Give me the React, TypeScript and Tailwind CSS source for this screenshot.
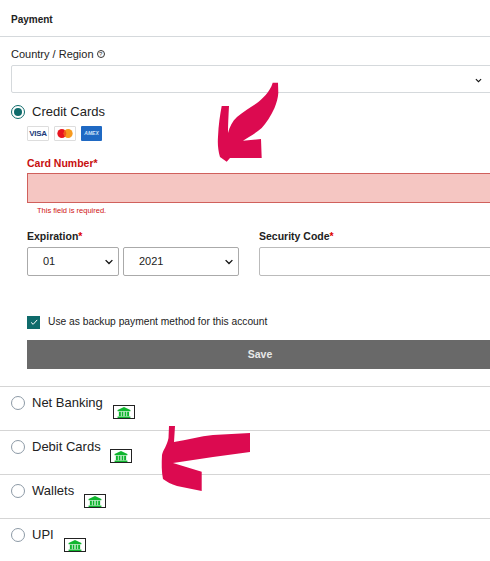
import React from 'react'

const PINK = '#dc0a50'

function Chevron({ className }: { className: string }) {
  return (
    <svg viewBox="0 0 12 8" className={className} fill="none" stroke="#111" strokeWidth="1.8">
      <path d="M1.5 1.5 6 6l4.5-4.5" />
    </svg>
  )
}

function Radio({ checked }: { checked?: boolean }) {
  return (
    <span className={`flex h-[14px] w-[14px] shrink-0 items-center justify-center rounded-full border-[1.5px] bg-white ${checked ? 'border-[#0f6b6b]' : 'border-[#8d9aa6]'}`}>
      {checked && <span className="h-[8px] w-[8px] rounded-full bg-[#0f6b6b]" />}
    </span>
  )
}

function BankIcon({ className }: { className: string }) {
  return (
    <span className={`flex h-[14px] w-[22px] items-center justify-center border border-[#222] bg-white ${className}`}>
      <svg viewBox="0 0 16 12" className="h-[11px] w-[16px]" fill="#0fb52e">
        <path d="M8 0 15 3.4V4.6H1V3.4Z" />
        <path d="M2.4 5.2h2.2v5H2.4ZM5.4 5.2h2v5h-2ZM8.6 5.2h2v5h-2ZM11.4 5.2h2.2v5h-2.2Z" />
        <path d="M1 10.4h14V12H1Z" />
      </svg>
    </span>
  )
}

function PayRow({ label, iconClass, height }: { label: string; iconClass: string; height: string }) {
  return (
    <div className={`flex border-t border-[#d5d5d5] pl-[11px] ${height}`}>
      <div className="mt-[9px] flex h-[14px] items-center">
        <Radio />
      </div>
      <span className="ml-[7px] mt-[8px] text-[13px] leading-[16px] text-[#222]">{label}</span>
      <BankIcon className={iconClass} />
    </div>
  )
}

function CardLogos() {
  return (
    <div className="ml-[27px] mt-[6px] flex gap-[5px]">
      <span className="flex h-[15px] w-[22px] items-center justify-center rounded-[1px] border border-[#ddd] bg-white text-[8px] font-bold leading-none tracking-[-0.3px] text-[#1a3a7a]">
        VISA
      </span>
      <span className="flex h-[15px] w-[22px] items-center justify-center rounded-[1px] border border-[#ddd] bg-white">
        <svg viewBox="0 0 20 12" className="h-[11px] w-[18px]">
          <circle cx="6.5" cy="6" r="5" fill="#e8141e" />
          <circle cx="13.5" cy="6" r="5" fill="#f79a1e" />
          <path d="M10 2.5a5 5 0 0 1 0 7 5 5 0 0 1 0-7Z" fill="#f2591c" />
        </svg>
      </span>
      <span className="flex h-[15px] w-[21px] items-center justify-center rounded-[1px] bg-[#1f69c3] text-[5px] font-bold italic leading-none text-[#cfe2f7]">
        AMEX
      </span>
    </div>
  )
}

export default function App() {
  return (
    <div className="relative h-[561px] w-[490px] overflow-hidden bg-white font-['Liberation_Sans',Arial,sans-serif] text-[#222]">
      <div className="flex h-[37px] items-start border-b border-[#d5d9dc] pl-[11px] pt-[14px] text-[10px] font-bold leading-[12px]">
        Payment
      </div>

      <div className="ml-[11px] mt-[10px] flex h-[14px] items-center gap-[3px] text-[11px] leading-[14px]">
        Country / Region
        <span className="flex h-[8px] w-[8px] items-center justify-center rounded-full border border-[#333] text-[6px] leading-none">?</span>
      </div>

      <div className="ml-[11px] mt-[4px] flex h-[28px] w-[490px] items-center rounded-[2px] border border-[#d5d9dc]">
        <Chevron className="ml-[463px] mt-[2px] h-[5px] w-[7px]" />
      </div>

      <div className="ml-[11px] mt-[11px] flex h-[16px] items-center gap-[7px]">
        <Radio checked />
        <span className="text-[13px] leading-[16px] text-[#222]">Credit Cards</span>
      </div>
      <CardLogos />

      <div className="ml-[27px] mt-[15px] h-[14px] text-[10.5px] font-bold leading-[14px] text-[#c80f0f]">Card Number*</div>
      <div className="ml-[27px] mt-[3px] h-[30px] w-[480px] border border-[#d0605c] bg-[#f5c6c2]" />
      <div className="ml-[37px] mt-[3px] h-[10px] text-[7.5px] leading-[10px] text-[#d01414]">This field is required.</div>

      <div className="ml-[27px] mt-[13px] flex text-[10.5px] font-bold leading-[14px]">
        <div className="w-[232px]">
          Expiration<span className="text-[#d00]">*</span>
        </div>
        <div>
          Security Code<span className="text-[#d00]">*</span>
        </div>
      </div>

      <div className="ml-[27px] mt-[4px] flex">
        <div className="flex h-[29px] w-[92px] shrink-0 items-center justify-between rounded-[2px] border border-[#aaa] pl-[15px] pr-[4px] text-[11px]">
          01
          <Chevron className="h-[6px] w-[10px]" />
        </div>
        <div className="ml-[4px] flex h-[29px] w-[116px] shrink-0 items-center justify-between rounded-[2px] border border-[#aaa] pl-[15px] pr-[4px] text-[11px]">
          2021
          <Chevron className="h-[6px] w-[10px]" />
        </div>
        <div className="ml-[20px] h-[29px] w-[260px] shrink-0 rounded-[2px] border border-[#bbb]" />
      </div>

      <div className="ml-[27px] mt-[39px] flex h-[14px] items-center gap-[8px]">
        <span className="flex h-[13px] w-[13px] items-center justify-center bg-[#0f6b6b]">
          <svg viewBox="0 0 12 12" className="h-[10px] w-[10px]" fill="none" stroke="#fff" strokeWidth="1.2">
            <path d="M2.5 6.5 5 8.8 9.8 3.5" />
          </svg>
        </span>
        <span className="text-[10.25px] leading-[14px]">Use as backup payment method for this account</span>
      </div>

      <div className="ml-[27px] mt-[11px] flex h-[29px] w-[480px] items-center justify-center bg-[#696969] pr-[14px] text-[10.5px] font-bold text-[#e8e8e8]">
        Save
      </div>

      <div className="mt-[17px]">
        <PayRow label="Net Banking" height="h-[44px]" iconClass="ml-[10px] mt-[18px]" />
        <PayRow label="Debit Cards" height="h-[44px]" iconClass="ml-[9px] mt-[18px]" />
        <PayRow label="Wallets" height="h-[44px]" iconClass="ml-[10px] mt-[19px]" />
        <PayRow label="UPI" height="h-[43px]" iconClass="ml-[10px] mt-[19px]" />
      </div>

      {/* annotation arrows drawn on top of the form */}
      <svg viewBox="0 0 490 561" className="pointer-events-none absolute left-0 top-0 h-[561px] w-[490px]" fill={PINK}>
        <path d="M272.7 82.7H278L278.3 93C278 98 276.5 103 274.5 108C271 116 266 123 261.7 128C256 133 249 137 243 140.7L261 139L261.7 158H230L226.7 161.7L220 157C218 150 217.5 144 218 136.7C218.5 125 220 115 221.7 106H229C228.5 115 228 125 228 133C229.5 127 232.5 121 237 117C243 112 251 107 257 103C262 99 270 92 272.7 82.7Z" />
        <path d="M169 426H175L174 442C187 440 200 436 213 435L250 433V452L213 457L173 463L201.7 471.7V491L177 486C171 484 167 482 163 479C161.5 472 161.5 463 162 455C163 450 167 446 168.5 438Z" />
      </svg>
    </div>
  )
}
